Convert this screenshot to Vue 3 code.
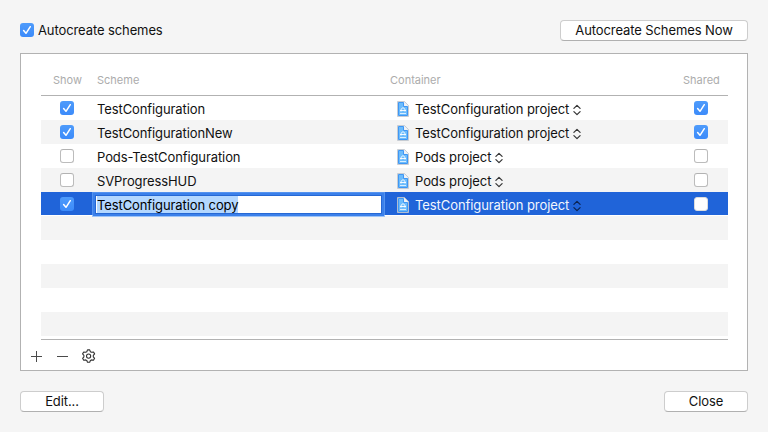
<script setup>
const rows = [
  { name: 'TestConfiguration', container: 'TestConfiguration project', show: true, shared: true },
  { name: 'TestConfigurationNew', container: 'TestConfiguration project', show: true, shared: true },
  { name: 'Pods-TestConfiguration', container: 'Pods project', show: false, shared: false },
  { name: 'SVProgressHUD', container: 'Pods project', show: false, shared: false },
  { name: 'TestConfiguration copy', container: 'TestConfiguration project', show: true, shared: false, editing: true },
]
const emptyRows = 5
</script>

<template>
  <main class="sheet">
    <header class="bar">
      <label class="auto">
        <span class="check on"><svg viewBox="0 0 14 14"><path d="M3.6 7.6 6 10.3 10.3 3.7" /></svg></span>
        <span class="auto-text">Autocreate schemes</span>
      </label>
      <button class="btn wide"><span>Autocreate Schemes Now</span></button>
    </header>

    <section class="panel">
      <div class="table">
        <div class="row head">
          <span class="h-show">Show</span>
          <span class="h-scheme">Scheme</span>
          <span class="h-container">Container</span>
          <span class="h-shared">Shared</span>
        </div>
        <div v-for="r in rows" :key="r.name" class="row item" :class="{ selected: r.editing }">
          <div class="cell center">
            <span class="check" :class="{ on: r.show }"><svg v-if="r.show" viewBox="0 0 14 14"><path d="M3.6 7.6 6 10.3 10.3 3.7" /></svg></span>
          </div>
          <div class="cell">
            <div v-if="r.editing" class="field"><span class="marked">{{ r.name }}</span></div>
            <span v-else class="name">{{ r.name }}</span>
          </div>
          <div class="cell container">
            <svg class="doc" viewBox="0 0 12 16">
              <path d="M.5.5h7l4 4v11H.5z" fill="#e3e9f0" stroke="#bcc3ca" stroke-width=".8" />
              <path d="M1.5 1.5h5v4h4v9h-9z" fill="#6cbcfc" stroke="#3f97f5" />
              <path d="M7.3 1.2v3.5h3.6z" fill="#f1f4f8" />
              <path d="M3 12.5h6" fill="none" stroke="#d9eeff" />
              <path d="M4 10.5V8.3L6 6.6l2 1.7v2.2M3 9.5h6" fill="none" stroke="#fff" stroke-width=".9" />
            </svg>
            <span class="project">{{ r.container }}</span>
            <svg class="updown" viewBox="0 0 8 12"><path d="M.9 4.4 4 1.3l3.1 3.1M.9 7.6 4 10.7l3.1-3.1" /></svg>
          </div>
          <div class="cell center">
            <span class="check" :class="{ on: r.shared }"><svg v-if="r.shared" viewBox="0 0 14 14"><path d="M3.6 7.6 6 10.3 10.3 3.7" /></svg></span>
          </div>
        </div>
        <div v-for="n in emptyRows" :key="n" class="row item"></div>
      </div>
      <div class="tools">
        <svg viewBox="0 0 14 14"><path d="M1 7.5h11M6.5 2v11" /></svg>
        <svg viewBox="0 0 14 14"><path d="M1 7.5h11" /></svg>
        <svg class="gear" viewBox="0 0 14 14">
          <path d="M5.5 .9h2.2l.7 1.8 1.1.6 2-.3 1.1 1.9-1.3 1.5v1.4l1.3 1.5-1.1 1.9-2-.3-1.1.6-.7 1.8H5.5l-.7-1.8-1.1-.6-2 .3L.6 9.3l1.3-1.5V6.4L.6 4.9 1.7 3l2 .3 1.1-.6z" />
          <circle cx="6.6" cy="7.1" r="2.1" />
        </svg>
      </div>
    </section>

    <footer class="bar">
      <button class="btn"><span>Edit...</span></button>
      <button class="btn"><span>Close</span></button>
    </footer>
  </main>
</template>

<style>
body { background: #f5f5f5; }
</style>

<style scoped>
.sheet {
  box-sizing: border-box;
  width: 768px;
  height: 432px;
  padding: 20px 20px 0;
  background: #f5f5f5;
  color: #111;
  font: 13px/16px Inter, "Liberation Sans", sans-serif;
  letter-spacing: -.1px;
  white-space: nowrap;
}
.bar { display: flex; justify-content: space-between; align-items: flex-start; height: 33px; }
.auto { display: flex; gap: 4px; padding-top: 3px; }
.auto-text { line-height: 15px; }
.check {
  display: block;
  box-sizing: border-box;
  width: 14px;
  height: 14px;
  border: 1px solid #bcbcbc;
  border-top-color: #b2b2b2;
  border-radius: 3px;
  background: #fff;
}
.check.on { border: 0; background: linear-gradient(#4e9bfb, #3c8bfa); }
.check svg { display: block; width: 14px; height: 14px; }
.check path { fill: none; stroke: #fff; stroke-width: 1.5; stroke-linecap: round; stroke-linejoin: round; }
.btn {
  box-sizing: border-box;
  width: 84px;
  height: 21px;
  padding: 0;
  border: 1px solid #cdcdcd;
  border-bottom-color: #b0b0b0;
  border-radius: 4px;
  background: #fff;
  color: inherit;
  font: inherit;
  letter-spacing: inherit;
  line-height: 19px;
}
.btn.wide { width: 188px; }
.panel {
  box-sizing: border-box;
  height: 318px;
  padding: 11px 19px 0 20px;
  border: 1px solid #b2b2b2;
  background: #fff;
}
.table { height: 274px; border-bottom: 1px solid #b2b2b2; }
.row { display: grid; grid-template-columns: 52px 297px 284px 54px; height: 24px; }
.head {
  box-sizing: border-box;
  height: 31px;
  border-bottom: 1px solid #b2b2b2;
  color: #acacac;
  font-size: 11px;
  letter-spacing: 0;
  line-height: 30px;
}
.h-show { padding-left: 12px; }
.h-scheme { padding-left: 4px; }
.h-shared { padding-left: 9px; }
.item:nth-child(odd) { background: #f4f4f4; }
.item.selected { height: 23px; margin-bottom: 1px; background: #2064d9; }
.cell { display: flex; align-items: flex-start; }
.center { justify-content: center; padding-top: 5px; }
.name { padding: 5px 0 0 4px; }
.container { padding: 5px 0 0 7px; }
.doc { width: 12px; height: 16px; margin-right: 6px; }
.updown { width: 8px; height: 12px; margin: 3px 0 0 3.5px; }
.updown path { fill: none; stroke: #333; stroke-width: 1.2; stroke-linecap: round; stroke-linejoin: round; }
.project { letter-spacing: -.08px; }
.selected .project { color: #f2f6fd; }
.selected .updown path { stroke: #0b2250; }
.selected .check:not(.on) { border-color: #dcdcdc; }
.field {
  box-sizing: border-box;
  width: 285px;
  height: 17px;
  margin: 4px 0 0 3px;
  background: #fff;
  box-shadow: 0 0 0 1px #2668d4, 0 0 0 3px #3b80ea, 0 0 0 4px rgba(110, 170, 250, .65);
}
.marked { display: inline-block; height: 17px; margin-left: 1px; background: #b3d7ff; line-height: 18px; color: #000; }
.tools { display: flex; gap: 12px; margin: 9px 0 0 -11px; }
.tools svg { width: 14px; height: 14px; fill: none; stroke: #4a4a4a; stroke-width: 1; }
.tools .gear { stroke: #333; stroke-width: 1.1; stroke-linejoin: round; }
footer.bar { padding-top: 20px; }
</style>
